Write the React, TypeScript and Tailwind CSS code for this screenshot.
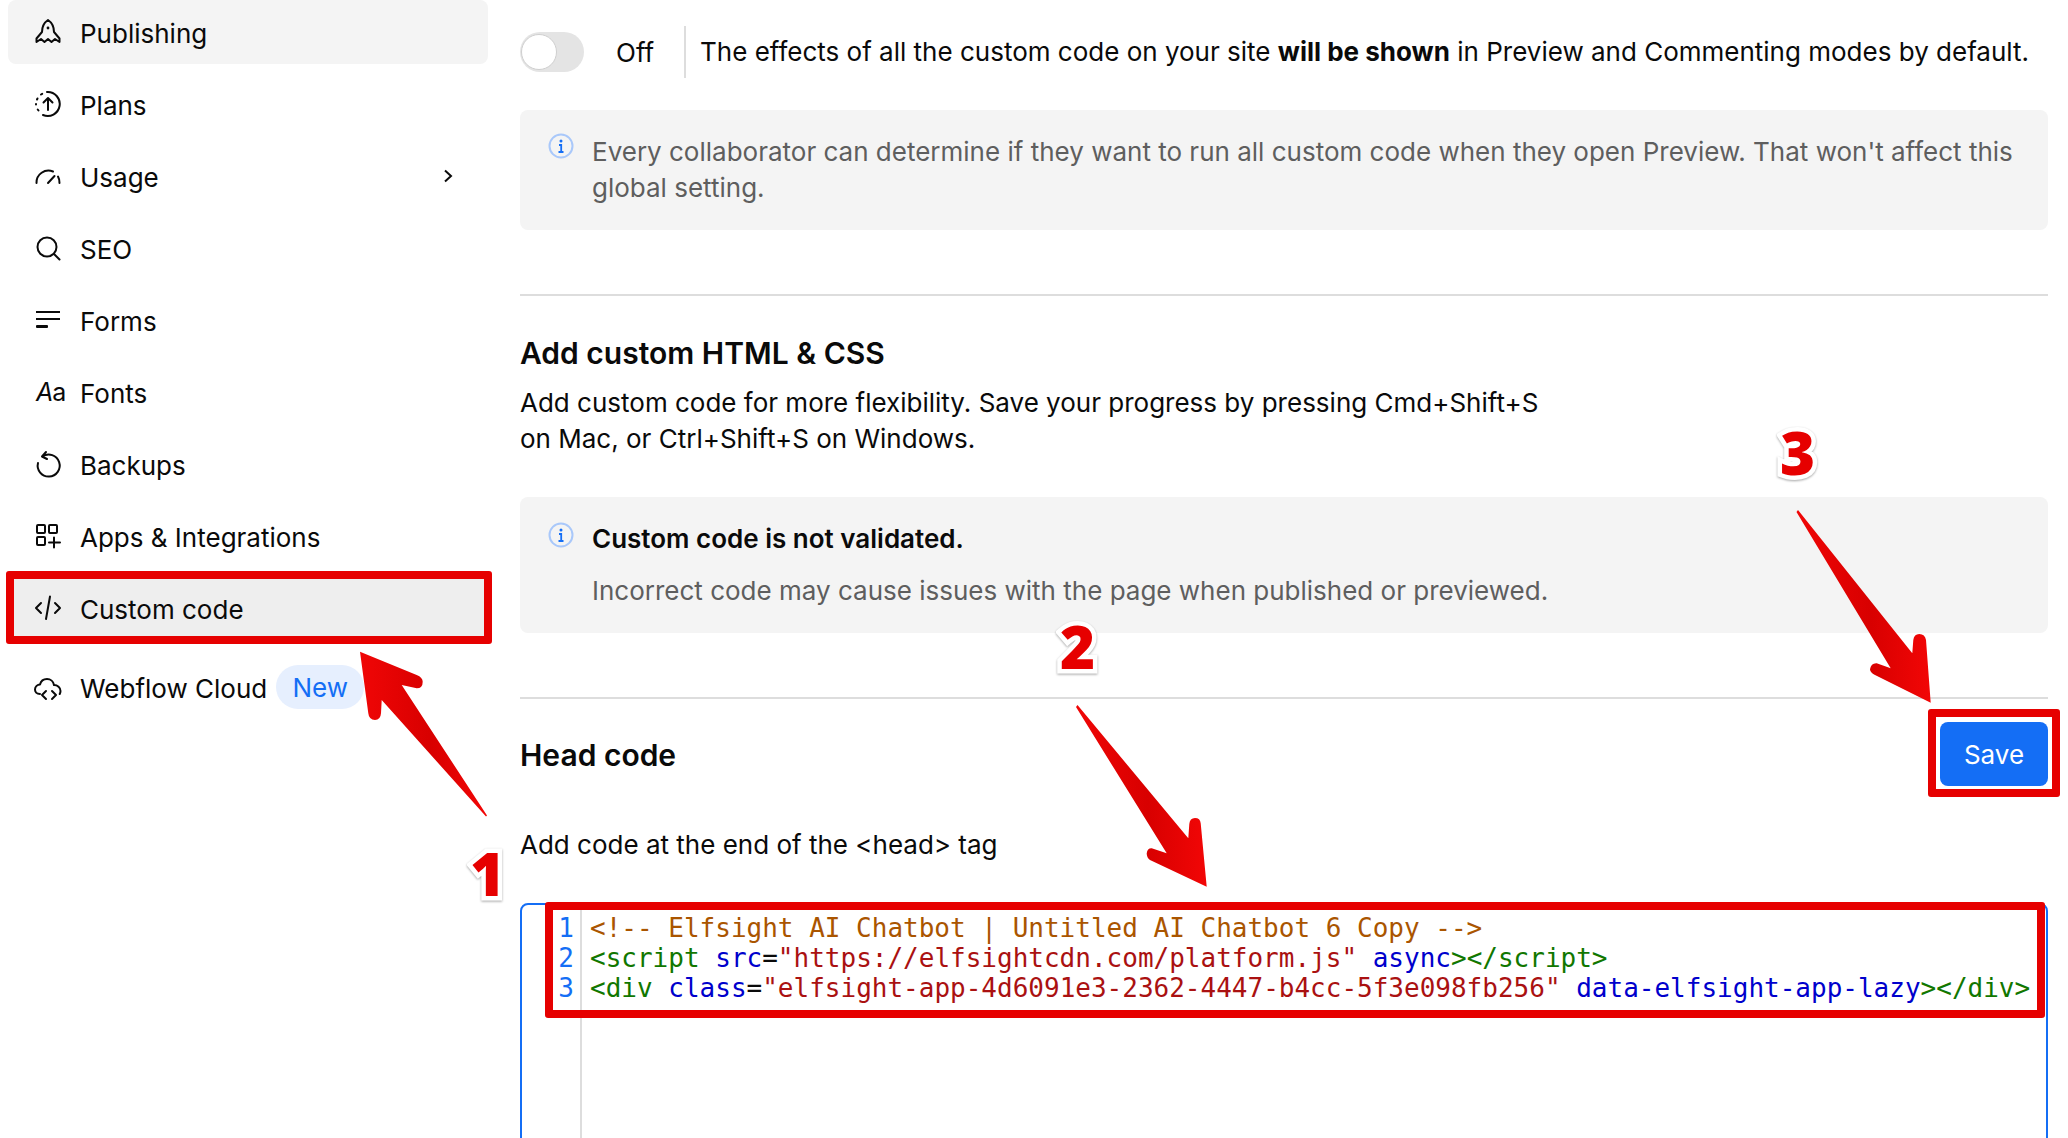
import React from "react";

const S = { fill: "none", stroke: "#0a0a0a", strokeWidth: 2, strokeLinecap: "round" as const, strokeLinejoin: "round" as const };

const RocketIcon = () => (
  <svg width="28" height="28" viewBox="0 0 28 28" {...S}>
    <path d="M14 2C9.500 5 8 9.500 8 14L2.500 20.500 2.500 24 7 21 10.500 24 14 21 17.500 24 21 21 25.500 24 25.500 20.500 20 14C20 9.500 18.500 5 14 2Z" />
    <circle cx="14" cy="10" r="1.400" fill="#0a0a0a" stroke="none" />
  </svg>
);
const PlansIcon = () => (
  <svg width="28" height="28" viewBox="0 0 28 28" {...S}>
    <path d="M13 2A12 12 0 1 1 9 25" />
    <path d="M7 4.500 8.200 3.800M3.500 8.500 3 9.500M2 14v.500M3.700 19.500 4.500 20.500" />
    <path d="M14 20V8M9.500 12.500 14 8l4.500 4.500" />
  </svg>
);
const UsageIcon = () => (
  <svg width="28" height="28" viewBox="0 0 28 28" {...S}>
    <path d="M2.500 21A12 12 0 0 1 19 9.500" />
    <path d="M24 14.500A12 12 0 0 1 25.500 21" />
    <path d="M14 21 20.500 14" />
  </svg>
);
const SearchIcon = () => (
  <svg width="28" height="28" viewBox="0 0 28 28" {...S}>
    <circle cx="13" cy="13" r="9.500" />
    <path d="M20 20l5.500 5.500" />
  </svg>
);
const FormsIcon = () => (
  <svg width="28" height="28" viewBox="0 0 28 28">
    <rect x="2" y="5" width="24" height="2" fill="#0a0a0a" />
    <rect x="2" y="12" width="24" height="2" fill="#0a0a0a" />
    <rect x="2" y="19" width="12" height="3" rx="1" fill="#0a0a0a" />
  </svg>
);
const BackupsIcon = () => (
  <svg width="28" height="28" viewBox="0 0 28 28" {...S}>
    <path d="M8.500 6.500A11 11 0 1 1 4 13" />
    <path d="M12 2 8 6.500 13 9" />
  </svg>
);
const AppsIcon = () => (
  <svg width="28" height="28" viewBox="0 0 28 28" {...S}>
    <rect x="3" y="3" width="8" height="8" rx="1" />
    <rect x="15" y="3" width="8" height="8" rx="1" />
    <rect x="3" y="15" width="8" height="8" rx="1" />
    <path d="M20 15.500v10M15 20.500h11" />
  </svg>
);
const CodeIcon = () => (
  <svg width="28" height="28" viewBox="0 0 28 28" {...S}>
    <path d="M7 9 2 14l5 5M21 9l5 5-5 5M16 2.500 12 25" />
  </svg>
);
const CloudIcon = () => (
  <svg width="30" height="30" viewBox="0 0 30 30" {...S} className="-ml-[1px]">
    <path d="M7 22C3.500 22 2 19.500 2 17.500 2 14.500 4.500 12.500 7 12.500 8 8.500 11 7 14 7c3.500 0 6.500 2.500 7 6 3.500 0 6.500 2.500 6.500 6 0 1-.3 2-.8 3" />
    <path d="M13 19l-4 4 4 4M19 19l4 4-4 4" />
  </svg>
);
const InfoIcon = () => (
  <svg width="26" height="26" viewBox="0 0 26 26" className="shrink-0">
    <circle cx="13" cy="13" r="11.500" fill="none" stroke="#a9c8fa" strokeWidth="2" />
    <circle cx="13" cy="8" r="1.500" fill="#146ef5" />
    <path d="M11 12h2.200v7M10.500 19h5" fill="none" stroke="#146ef5" strokeWidth="1.800" />
  </svg>
);

function NavItem({ icon, label, active, children }: { icon: React.ReactNode; label: string; active?: string; children?: React.ReactNode }) {
  return (
    <div className={`flex h-16 items-center rounded-lg pl-[26px] pr-[34px] ${active ?? ""}`}>
      <span className="flex w-[46px] shrink-0 items-center">{icon}</span>
      <span className="mt-[3px] text-[26px] leading-9 text-[#0a0a0a]">{label}</span>
      {children}
    </div>
  );
}

const Tag = ({ c }: { c: string }) => <span className="text-[#117700]">{c}</span>;
const Attr = ({ c }: { c: string }) => <span className="text-[#0000cc]">{c}</span>;
const Str = ({ c }: { c: string }) => <span className="text-[#aa1111]">{c}</span>;

const Number_ = ({ n, cls }: { n: string; cls: string }) => (
  <span
    className={`absolute font-extrabold text-[60px] leading-none text-[#e60000] [-webkit-text-stroke:9px_white] [paint-order:stroke_fill] drop-shadow-[0_1px_1px_rgba(0,0,0,0.35)] ${cls}`}
    style={{ fontFamily: '"Open Sans", sans-serif' }}
  >
    {n}
  </span>
);

export default function App() {
  return (
    <div
      className="relative flex h-[1138px] w-[2068px] overflow-hidden bg-white text-[#0a0a0a]"
      style={{ fontFamily: "Inter, sans-serif" }}
    >
      {/* Sidebar */}
      <aside className="w-[520px] shrink-0 pl-2 pr-8">
        <div className="flex flex-col gap-2">
          <NavItem icon={<RocketIcon />} label="Publishing" active="bg-[#f4f4f4]" />
          <NavItem icon={<PlansIcon />} label="Plans" />
          <NavItem icon={<UsageIcon />} label="Usage">
            <svg width="12" height="16" viewBox="0 0 12 16" className="ml-auto" fill="none" stroke="#0a0a0a" strokeWidth="2">
              <path d="M3 2.500 9 8l-6 5.500" />
            </svg>
          </NavItem>
          <NavItem icon={<SearchIcon />} label="SEO" />
          <NavItem icon={<FormsIcon />} label="Forms" />
          <NavItem
            icon={<span className="ml-[2px] text-[25px] italic leading-none tracking-[-1px]">A<span className="not-italic">a</span></span>}
            label="Fonts"
          />
          <NavItem icon={<BackupsIcon />} label="Backups" />
          <NavItem icon={<AppsIcon />} label="Apps & Integrations" />
          <NavItem icon={<CodeIcon />} label="Custom code" active="bg-[#eeeeee]" />
          <div className="mt-[7px]">
            <NavItem icon={<CloudIcon />} label="Webflow Cloud">
              <span className="ml-[9px] flex h-11 w-[88px] items-center justify-center rounded-full bg-[#e6effe] text-[26px] text-[#146ef5]">New</span>
            </NavItem>
          </div>
        </div>
      </aside>

      {/* Main */}
      <main className="w-[1528px] shrink-0">
        <div className="mt-[26px] flex h-[52px] items-center">
          <div className="relative h-10 w-16 rounded-full bg-[#e4e4e4]">
            <div className="absolute left-[1px] top-[2px] h-9 w-9 rounded-full border border-[#cfcfcf] bg-white" />
          </div>
          <span className="ml-8 w-[68px] text-[26px]">Off</span>
          <div className="h-[52px] w-[2px] bg-[#dddddd]" />
          <p className="ml-[14px] whitespace-nowrap text-[26px] leading-9">
            The effects of all the custom code on your site <b className="font-bold">will be shown</b> in Preview and Commenting modes by default.
          </p>
        </div>

        <div className="mt-8 flex h-[120px] gap-[18px] rounded-lg bg-[#f4f4f4] pl-7 pr-5 pt-6">
          <div className="-mt-[1px] shrink-0"><InfoIcon /></div>
          <p className="text-[26px] leading-9 text-[#5e5e5e]">
            Every collaborator can determine if they want to run all custom code when they open Preview. That won't affect this global setting.
          </p>
        </div>

        <div className="mt-16 h-[2px] bg-[#dddddd]" />

        <h2 className="mt-[39px] text-[30px] font-semibold leading-9">Add custom HTML &amp; CSS</h2>
        <p className="mt-[14px] w-[1040px] text-[26px] leading-9">
          Add custom code for more flexibility. Save your progress by pressing Cmd+Shift+S on Mac, or Ctrl+Shift+S on Windows.
        </p>

        <div className="mt-10 flex h-[136px] gap-[18px] rounded-lg bg-[#f4f4f4] pl-7 pt-6">
          <div className="mt-[1px] shrink-0"><InfoIcon /></div>
          <div>
            <p className="text-[26px] font-semibold leading-9">Custom code is not validated.</p>
            <p className="mt-4 text-[26px] leading-9 text-[#5e5e5e]">Incorrect code may cause issues with the page when published or previewed.</p>
          </div>
        </div>

        <div className="mt-16 h-[2px] bg-[#dddddd]" />

        <div className="mt-[23px] flex h-16 items-center justify-between">
          <h2 className="mt-[2px] text-[30px] font-semibold leading-9">Head code</h2>
          <button className="h-16 w-[108px] rounded-lg bg-[#146ef5] text-[26px] text-white">Save</button>
        </div>

        <p className="mt-[41px] text-[26px] leading-9">Add code at the end of the &lt;head&gt; tag</p>

        <div className="mt-10 flex h-[400px] rounded-t-lg border-2 border-[#146ef5]" style={{ fontFamily: '"DejaVu Sans Mono", monospace' }}>
          <div className="w-[60px] shrink-0 border-r-2 border-[#dddddd] pr-[6px] pt-2 text-right text-[26px] leading-[30px] text-[#146ef5]">
            <div>1</div>
            <div>2</div>
            <div>3</div>
          </div>
          <div className="whitespace-pre pl-[8px] pt-2 text-[26px] leading-[30px]">
            <div className="text-[#aa5500]">{"<!-- Elfsight AI Chatbot | Untitled AI Chatbot 6 Copy -->"}</div>
            <div>
              <Tag c="<script" /> <Attr c="src" />=<Str c={'"https://elfsightcdn.com/platform.js"'} /> <Attr c="async" /><Tag c="></script>" />
            </div>
            <div>
              <Tag c="<div" /> <Attr c="class" />=<Str c={'"elfsight-app-4d6091e3-2362-4447-b4cc-5f3e098fb256"'} /> <Attr c="data-elfsight-app-lazy" /><Tag c="></div>" />
            </div>
          </div>
        </div>
      </main>

      {/* Annotations */}
      <div className="pointer-events-none absolute left-[6px] top-[571px] h-[73px] w-[486px] rounded-[3px] border-[8px] border-[#e60000]" />
      <div className="pointer-events-none absolute left-[1928px] top-[709px] h-[88px] w-[132px] rounded-[3px] border-[8px] border-[#e60000]" />
      <div className="pointer-events-none absolute left-[545px] top-[902px] h-[116px] w-[1500px] rounded-[3px] border-[8px] border-[#e60000]" />

      <svg className="pointer-events-none absolute left-0 top-0" width="2068" height="1138" viewBox="0 0 2068 1138">
        <defs>
          <linearGradient id="arrowA" x1="0" y1="0" x2="1" y2="0">
            <stop offset="0" stopColor="#f00606" />
            <stop offset="0.55" stopColor="#d80000" />
            <stop offset="1" stopColor="#f20606" />
          </linearGradient>
        </defs>
        <path
          fill="url(#arrowA)"
          d="M360 651.700L416.700 675Q422.700 677.500 422.700 681.700Q422.700 688.300 416.700 688.300L401.700 685L487 815.500L486 816.500L381.700 700L381 713.300Q380.500 720 375 720Q369 720 368.300 713.300Z"
        />
        <path
          fill="url(#arrowA)"
          d="M1076 707L1077.500 705L1188.300 838.300L1189.300 824Q1189.800 818 1195 818Q1200.200 818 1200.700 823.300L1206.700 886.700L1150 860Q1146.700 858 1146.700 853.300Q1147.500 848 1151.700 848.300L1166.700 853.300Z"
        />
        <path
          fill="url(#arrowA)"
          d="M1796.500 512L1798 510L1912.300 653.300L1913.300 640Q1914 634 1919.300 634Q1925 634 1926 640L1930.700 702.700L1875 675Q1870 672.500 1870 669.300Q1871 663 1876.700 663.300L1890.700 668.300Z"
        />
      </svg>

      <Number_ n="1" cls="left-[470px] top-[843px]" />
      <Number_ n="2" cls="left-[1060px] top-[616px]" />
      <Number_ n="3" cls="left-[1780px] top-[422px]" />
    </div>
  );
}
